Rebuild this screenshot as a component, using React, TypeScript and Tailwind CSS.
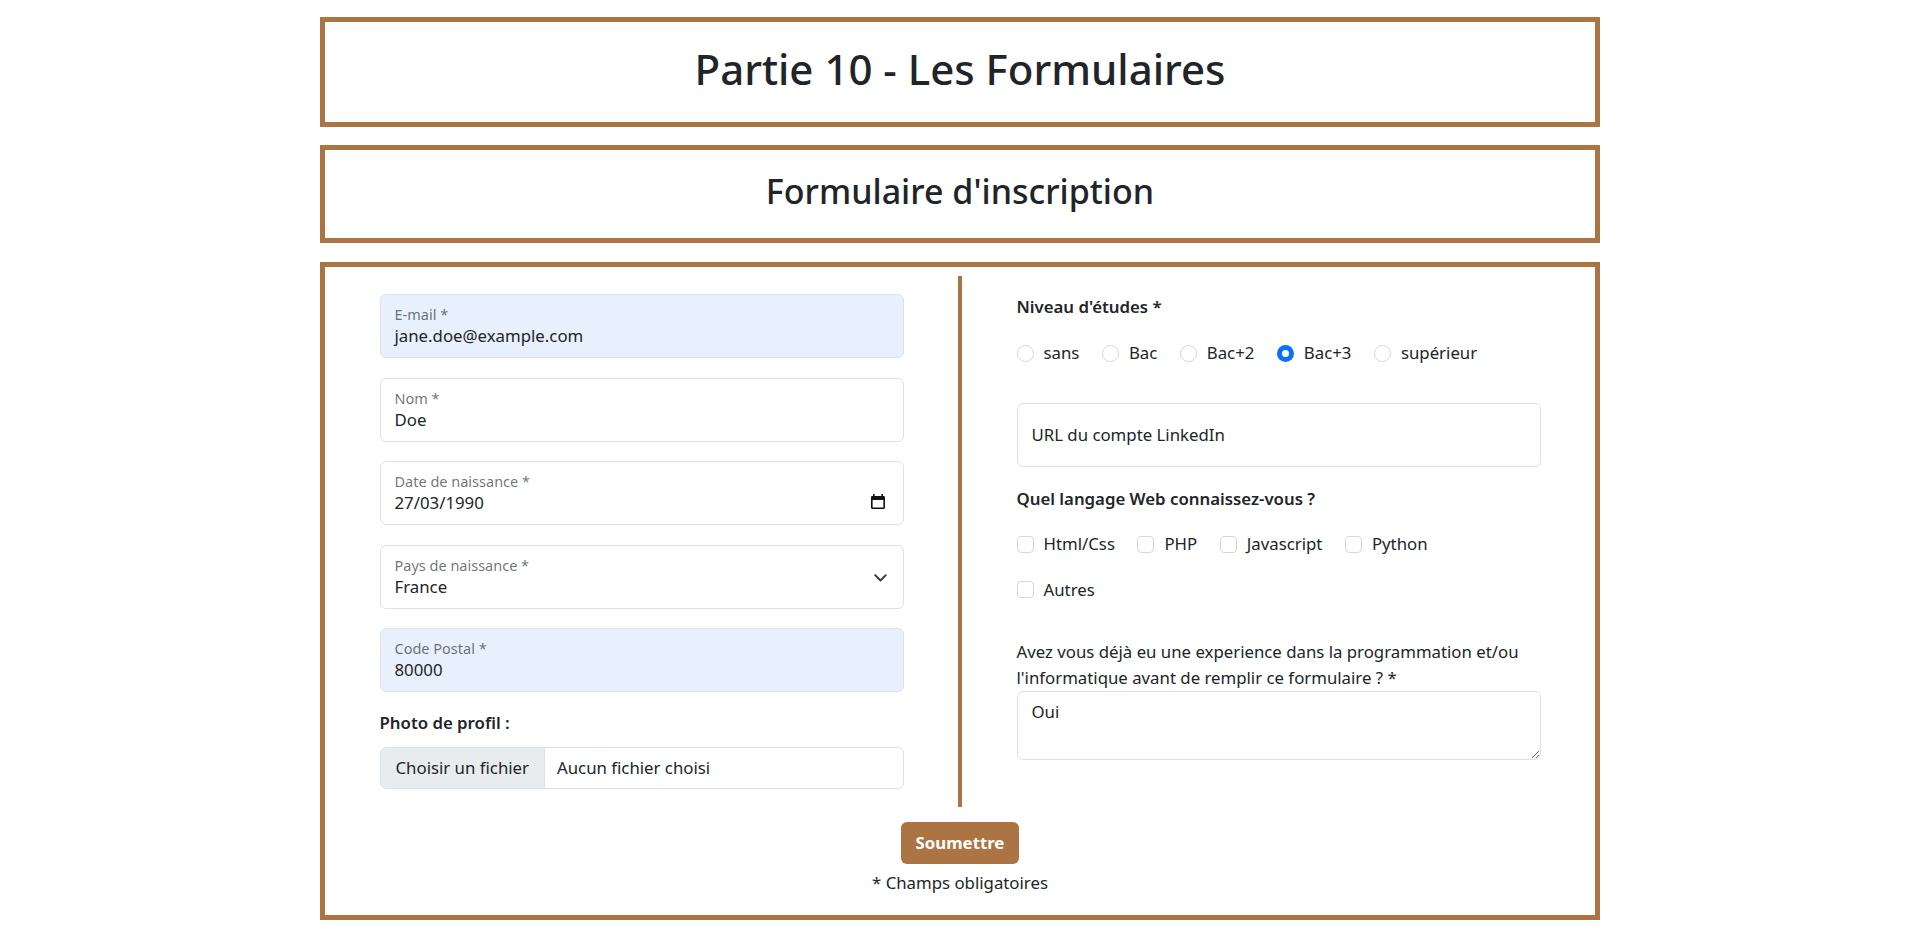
import React from "react";

const brown = "border-[#ac7442]";

function CalendarIcon() {
  return (
    <svg width="14" height="15" viewBox="0 0 14 15" fill="none">
      <rect x="2" y="0" width="1.6" height="2.5" fill="#111" />
      <rect x="10.4" y="0" width="1.6" height="2.5" fill="#111" />
      <rect x="0.8" y="2.8" width="12.4" height="11.4" rx="0.6" stroke="#111" strokeWidth="1.6" />
      <rect x="0.8" y="2.8" width="12.4" height="3.2" fill="#111" />
    </svg>
  );
}

function ChevronIcon() {
  return (
    <svg width="13" height="8" viewBox="0 0 13 8" fill="none">
      <path d="M1.2 1.2 L6.5 6.5 L11.8 1.2" stroke="#343a40" strokeWidth="1.9" strokeLinecap="round" strokeLinejoin="round" />
    </svg>
  );
}

type FieldProps = {
  label: string;
  value: string;
  autofill?: boolean;
  kind?: "date" | "select";
};

function FloatingField({ label, value, autofill, kind }: FieldProps) {
  return (
    <div
      className={`relative h-[64px] rounded-[6px] border border-[#dee2e6] px-[14px] pt-[9px] ${
        autofill ? "bg-[#e8f0fe]" : "bg-white"
      }`}
    >
      <div className="text-[14.5px] leading-[20px] text-[#212529]/65">{label}</div>
      <div className="text-[16.8px] leading-[24px] text-[#212529]">{value}</div>
      {kind === "date" && (
        <div className="absolute right-[18px] top-[32px]">
          <CalendarIcon />
        </div>
      )}
      {kind === "select" && (
        <div className="absolute right-[16px] top-[28px]">
          <ChevronIcon />
        </div>
      )}
    </div>
  );
}

function Radio({ label, checked }: { label: string; checked?: boolean }) {
  return (
    <label className="mr-[22.5px] flex items-center">
      {checked ? (
        <span className="flex h-[17px] w-[17px] items-center justify-center rounded-full bg-[#0d6efd]">
          <span className="h-[7px] w-[7px] rounded-full bg-white" />
        </span>
      ) : (
        <span className="h-[17px] w-[17px] rounded-full border border-[#d3d7dc] bg-white" />
      )}
      <span className="ml-[10px]">{label}</span>
    </label>
  );
}

function Check({ label }: { label: string }) {
  return (
    <label className="mr-[22.5px] flex items-center">
      <span className="h-[17px] w-[17px] rounded-[4px] border border-[#d3d7dc] bg-white" />
      <span className="ml-[10px]">{label}</span>
    </label>
  );
}

export default function App() {
  return (
    <div className="min-h-screen bg-white pl-[4px] font-['Noto_Sans','Open_Sans',sans-serif] text-[16.8px] leading-[26.4px] text-[#212529]">
      <div className="mx-auto flex w-[1280px] flex-col gap-[18px] pt-[17px]">
        {/* titre */}
        <div className={`flex h-[110px] items-center justify-center border-[5px] pb-[6px] ${brown}`}>
          <h1 className="text-[42px] font-medium leading-[50px]">Partie 10 - Les Formulaires</h1>
        </div>

        <div className={`flex h-[98px] items-center justify-center border-[5px] pb-[6px] ${brown}`}>
          <h2 className="text-[34px] font-medium leading-[42px]">Formulaire d'inscription</h2>
        </div>

        {/* formulaire */}
        <form className={`mt-px border-[5px] ${brown} pt-[9px] pb-[18px]`}>
          <div className="flex">
            {/* colonne gauche */}
            <div className="w-[633px] py-[18px]">
              <div className="mx-auto w-[524px]">
                <div className="flex flex-col gap-[19.5px]">
                  <FloatingField label="E-mail *" value="jane.doe@example.com" autofill />
                  <FloatingField label="Nom *" value="Doe" />
                  <FloatingField label="Date de naissance *" value="27/03/1990" kind="date" />
                  <FloatingField label="Pays de naissance *" value="France" kind="select" />
                  <FloatingField label="Code Postal *" value="80000" autofill />
                </div>
                <div className="mt-[18px] font-semibold">Photo de profil :</div>
                <div className="mt-[11px] flex h-[42px] overflow-hidden rounded-[6px] border border-[#dee2e6]">
                  <div className="flex items-center border-r border-[#dee2e6] bg-[#e9ecef] px-[15px]">
                    Choisir un fichier
                  </div>
                  <div className="flex items-center px-[12px]">Aucun fichier choisi</div>
                </div>
              </div>
            </div>

            {/* colonne droite */}
            <div className={`flex-1 border-l-4 ${brown} py-[18px]`}>
              <div className="mx-auto w-[524px]">
                <div className="font-semibold">Niveau d'études *</div>
                <div className="mt-[20px] flex">
                  <Radio label="sans" />
                  <Radio label="Bac" />
                  <Radio label="Bac+2" />
                  <Radio label="Bac+3" checked />
                  <Radio label="supérieur" />
                </div>

                <div className="mt-[36px] flex h-[64px] items-center rounded-[6px] border border-[#dee2e6] px-[14px]">
                  URL du compte LinkedIn
                </div>

                <div className="mt-[19px] font-semibold">Quel langage Web connaissez-vous ?</div>
                <div className="mt-[19px] flex">
                  <Check label="Html/Css" />
                  <Check label="PHP" />
                  <Check label="Javascript" />
                  <Check label="Python" />
                </div>
                <div className="mt-[19px] flex">
                  <Check label="Autres" />
                </div>

                <p className="mt-[36px] whitespace-nowrap leading-[26px]">
                  Avez vous déjà eu une experience dans la programmation et/ou
                  <br />
                  l'informatique avant de remplir ce formulaire ? *
                </p>
                <textarea
                  defaultValue="Oui"
                  className="block h-[69px] w-full rounded-[6px] border border-[#dee2e6] px-[14px] pt-[7px] leading-[26.4px] outline-none"
                />
              </div>
            </div>
          </div>

          <div className="mt-[15px] flex flex-col items-center">
            <button
              type="button"
              className="flex h-[42px] w-[118px] items-center justify-center rounded-[6px] bg-[#ac7442] font-bold text-white"
            >
              Soumettre
            </button>
            <div className="mt-[6px]">* Champs obligatoires</div>
          </div>
        </form>
      </div>
    </div>
  );
}
